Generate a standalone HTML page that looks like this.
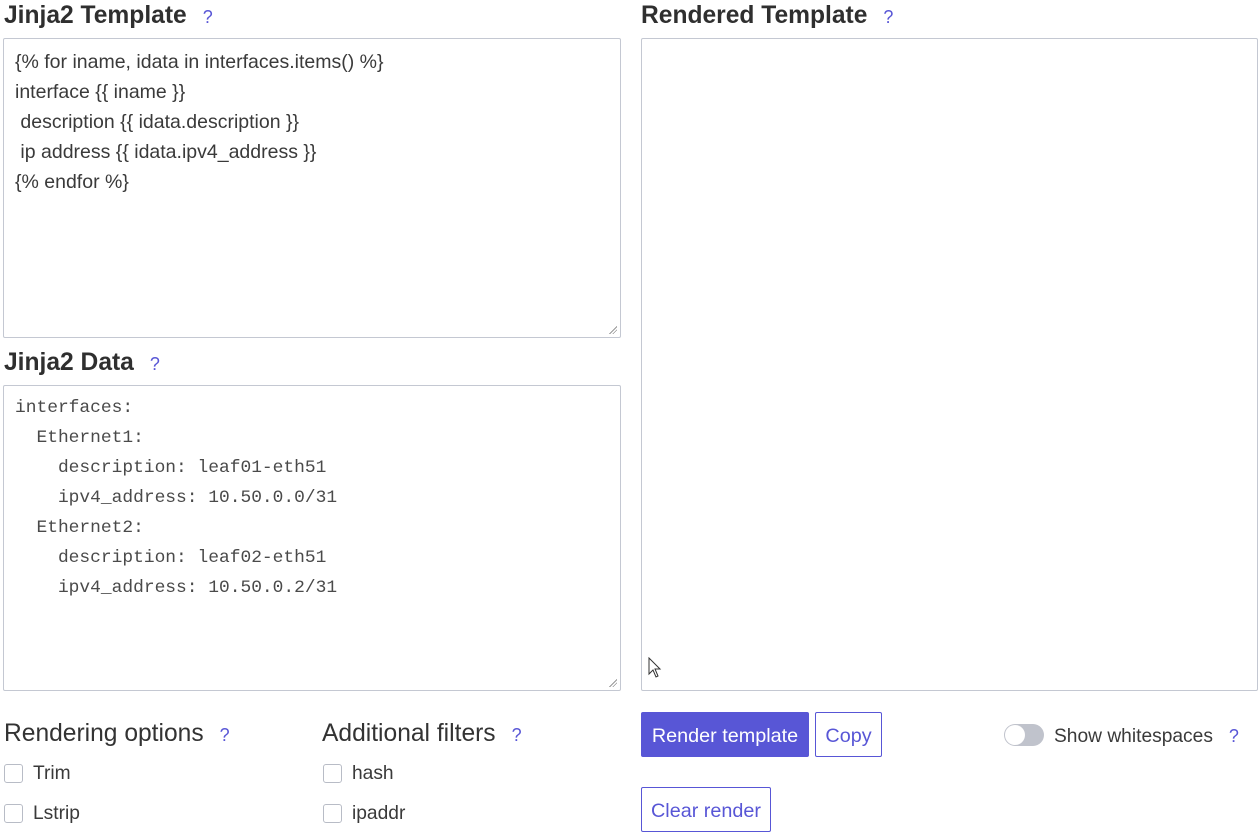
<!DOCTYPE html>
<html><head><meta charset="utf-8"><style>
body{margin:0;width:1260px;height:832px;background:#fff;font-family:"Liberation Sans",sans-serif;color:#363636;position:relative;overflow:hidden}
.a{position:absolute;white-space:pre}
h2{position:absolute;margin:0;font-size:24.6px;font-weight:bold;color:#2f2f2f;white-space:nowrap}
.q{color:#5856d6;font-weight:normal;font-size:18px;margin-left:16px}
.box{position:absolute;border:1px solid #c4c8d2;border-radius:2px;box-sizing:border-box}
.t1{font-size:19.5px;line-height:30px;color:#3a3a3a}
.t2{font-family:"Liberation Mono",monospace;font-size:17.9px;line-height:30px;color:#4a4a4a}
.h3{font-size:24.6px;color:#333}
.cb{position:absolute;width:19px;height:19px;border:1px solid #b8bcc6;border-radius:3px;box-sizing:border-box}
.lb{position:absolute;font-size:19.2px;color:#3a3a3a}
.btn{position:absolute;box-sizing:border-box;border:1px solid #5856d6;border-radius:2px;font-size:19.8px;color:#5856d6;text-align:center;line-height:46px}
.grip{position:absolute;right:3px;bottom:3px;width:8px;height:8px;background:linear-gradient(135deg,transparent 50%,#999 50%,#999 58%,transparent 58%,transparent 70%,#999 70%,#999 78%,transparent 78%)}
</style></head><body>
<h2 style="left:4px;top:2px">Jinja2 Template<span class="q">?</span></h2>
<div class="box" style="left:3px;top:38px;width:618px;height:300px"><div class="grip"></div></div>
<div class="a t1" style="left:15px;top:47px">{% for iname, idata in interfaces.items() %}
interface {{ iname }}
 description {{ idata.description }}
 ip address {{ idata.ipv4_address }}
{% endfor %}</div>
<h2 style="left:4px;top:349px">Jinja2 Data<span class="q">?</span></h2>
<div class="box" style="left:3px;top:385px;width:618px;height:306px"><div class="grip"></div></div>
<div class="a t2" style="left:15px;top:393px">interfaces:
  Ethernet1:
    description: leaf01-eth51
    ipv4_address: 10.50.0.0/31
  Ethernet2:
    description: leaf02-eth51
    ipv4_address: 10.50.0.2/31</div>
<h2 style="left:641px;top:2px">Rendered Template<span class="q">?</span></h2>
<div class="box" style="left:641px;top:38px;width:617px;height:653px"></div>
<svg class="a" style="left:648px;top:657px" width="14" height="22" viewBox="0 0 14 22"><path d="M1 1 L1 17 L5 13 L8 20 L10 19 L7 12 L12 12 Z" fill="#fff" stroke="#333" stroke-width="1"/></svg>
<div class="a h3" style="left:4px;top:720px">Rendering options<span class="q">?</span></div>
<div class="cb" style="left:4px;top:764px"></div><div class="lb" style="left:33px;top:763px">Trim</div>
<div class="cb" style="left:4px;top:804px"></div><div class="lb" style="left:33px;top:803px">Lstrip</div>
<div class="a h3" style="left:322px;top:720px">Additional filters<span class="q">?</span></div>
<div class="cb" style="left:323px;top:764px"></div><div class="lb" style="left:352px;top:763px">hash</div>
<div class="cb" style="left:323px;top:804px"></div><div class="lb" style="left:352px;top:803px">ipaddr</div>
<div class="btn" style="left:641px;top:712px;width:168px;height:45px;background:#5856d6;color:#fff">Render template</div>
<div class="btn" style="left:815px;top:712px;width:67px;height:45px">Copy</div>
<div class="a" style="left:1004px;top:724px;width:40px;height:22px;border-radius:11px;background:#c0c3cc"></div>
<div class="a" style="left:1005px;top:725px;width:20px;height:20px;border-radius:10px;background:#fff"></div>
<div class="lb" style="left:1054px;top:726px">Show whitespaces<span class="q">?</span></div>
<div class="btn" style="left:641px;top:787px;width:130px;height:45px">Clear render</div>
</body></html>
